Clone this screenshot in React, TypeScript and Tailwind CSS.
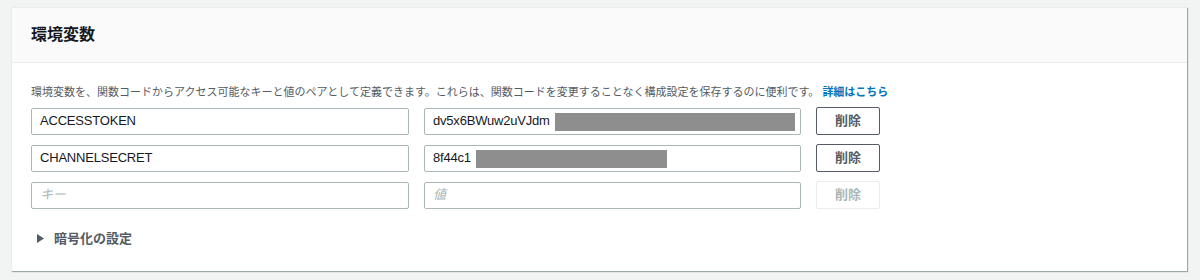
import type { ReactNode } from 'react'

const FONT = { fontFamily: '"Liberation Sans", "Noto Sans CJK JP", sans-serif' }

interface EnvRow {
  key: string
  value: string
  mask?: { left: number; width: number }
}

const rows: EnvRow[] = [
  { key: 'ACCESSTOKEN', value: 'dv5x6BWuw2uVJdm', mask: { left: 130, width: 240 } },
  { key: 'CHANNELSECRET', value: '8f44c1', mask: { left: 51, width: 191 } },
]

function Field({ children, mask }: { children: ReactNode; mask?: EnvRow['mask'] }) {
  return (
    <div className="relative flex h-[27px] items-center rounded-[2px] border border-[#aab7b8] bg-white px-[8px] text-[13px] tracking-[-0.2px] text-[#16191f]">
      {children}
      {mask && (
        <span
          className="absolute top-[4px] h-[18px] bg-[#8e8e8e]"
          style={{ left: mask.left, width: mask.width }}
        />
      )}
    </div>
  )
}

function DeleteButton({ disabled }: { disabled?: boolean }) {
  return (
    <button
      className={
        disabled
          ? 'h-[28px] w-[64px] rounded-[2px] border border-[#eaeded] bg-white text-[13px] font-bold text-[#aab7b8]'
          : 'h-[28px] w-[64px] rounded-[2px] border border-[#545b64] bg-white text-[13px] font-bold text-[#545b64]'
      }
    >
      削除
    </button>
  )
}

export default function App() {
  return (
    <div className="h-[280px] w-[1200px] bg-[#f2f3f3] pl-[11px] pt-[7px]" style={FONT}>
      <div className="w-[1176px] border-l border-t border-[#eaeded] bg-white shadow-[1px_1px_1px_0_rgba(0,28,36,0.35)]">
        {/* header */}
        <div className="flex h-[55px] items-center border-b border-[#eaeded] bg-[#fafafa] pl-[19px]">
          <h2 className="text-[16px] font-bold text-[#16191f]">環境変数</h2>
        </div>

        {/* body */}
        <div className="pl-[19px] pb-[22px] pt-[21px]">
          <p className="text-[11px] leading-[16px] text-[#545b64]">
            環境変数を、関数コードからアクセス可能なキーと値のペアとして定義できます。これらは、関数コードを変更することなく構成設定を保存するのに便利です。
            <a className="ml-[3px] font-bold text-[#0073bb]">詳細はこちら</a>
          </p>

          <div className="mt-[7px] flex flex-col gap-[9px]">
            {rows.map((r) => (
              <div key={r.key} className="grid grid-cols-[378px_377px_64px] items-center gap-[15px]">
                <Field>{r.key}</Field>
                <Field mask={r.mask}>{r.value}</Field>
                <DeleteButton />
              </div>
            ))}
            <div className="grid grid-cols-[378px_377px_64px] items-center gap-[15px]">
              <Field>
                <span className="italic text-[#aab7b8]">キー</span>
              </Field>
              <Field>
                <span className="italic text-[#aab7b8]">値</span>
              </Field>
              <DeleteButton disabled />
            </div>
          </div>

          <div className="mt-[20px] flex items-center gap-[10px] pl-[6px] text-[13px] font-bold text-[#545b64]">
            <svg width="7" height="9" viewBox="0 0 7 9">
              <path d="M0 0 L7 4.5 L0 9 Z" fill="#545b64" />
            </svg>
            <span>暗号化の設定</span>
          </div>
        </div>
      </div>
    </div>
  )
}
